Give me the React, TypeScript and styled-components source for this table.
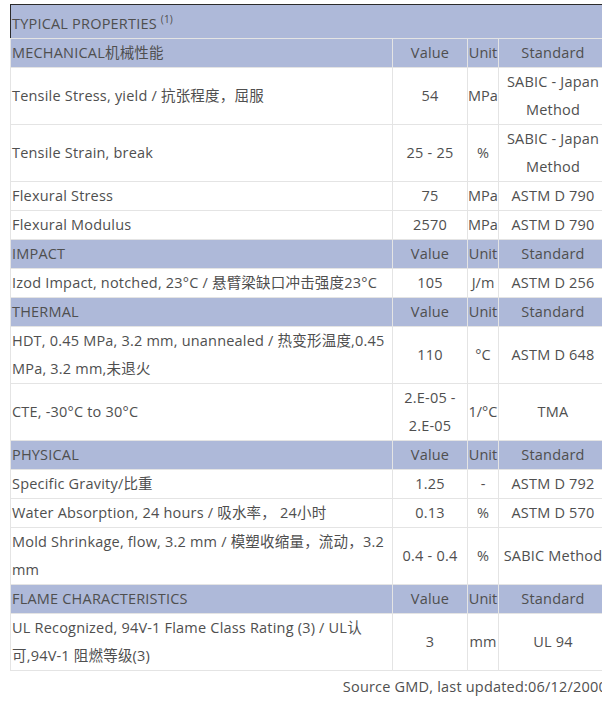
import React from "react";
import styled, { createGlobalStyle } from "styled-components";

const Global = createGlobalStyle`
  html, body { margin: 0; padding: 0; background: #ffffff; }
  body {
    font-family: "Open Sans", "Noto Sans CJK SC", sans-serif;
    color: #4f4f4f;
  }
`;

const Page = styled.div`
  width: 598px;
  padding: 4px 0 0 10px;
`;

const Table = styled.table`
  width: 597px;
  border-collapse: collapse;
  border-top: 1px solid #2b2b2b;
  border-left: 1px solid #2b2b2b;
  border-bottom: 1px solid #2b2b2b;
  font-size: 14.5px;
  letter-spacing: 0.2px;
  line-height: 28px;
  table-layout: fixed;
`;

const Row = styled.tr<{ $head?: boolean }>`
  background: ${(p) => (p.$head ? "#aeb9d9" : "#ffffff")};
`;

const Cell = styled.td<{ $align?: "left" | "center"; $tight?: boolean }>`
  border: 1px solid #e4e4e4;
  padding: ${(p) => (p.$tight ? "0" : "0 1px")};
  text-align: ${(p) => p.$align ?? "center"};
  vertical-align: middle;
  white-space: ${(p) => (p.$tight ? "nowrap" : "normal")};
  letter-spacing: ${(p) => (p.$tight ? "0" : "0.2px")};
  overflow: visible;
`;

const TitleCell = styled.td`
  border-bottom: 1px solid #e4e4e4;
  padding: 5px 1px 0;
  text-align: left;
`;

const Sup = styled.sup`
  font-size: 10px;
  line-height: 0;
  vertical-align: 6px;
`;

const Footer = styled.div`
  width: 597px;
  text-align: right;
  font-size: 14.5px;
  letter-spacing: 0.2px;
  line-height: 20px;
  padding-top: 6px;
  white-space: nowrap;
`;

type Data = [string, string, string, string];
type Section = { title: string; rows: Data[] };

const sections: Section[] = [
  {
    title: "MECHANICAL机械性能",
    rows: [
      ["Tensile Stress, yield / 抗张程度，屈服", "54", "MPa", "SABIC - Japan Method"],
      ["Tensile Strain, break", "25 - 25", "%", "SABIC - Japan Method"],
      ["Flexural Stress", "75", "MPa", "ASTM D 790"],
      ["Flexural Modulus", "2570", "MPa", "ASTM D 790"],
    ],
  },
  {
    title: "IMPACT",
    rows: [["Izod Impact, notched, 23°C / 悬臂梁缺口冲击强度23°C", "105", "J/m", "ASTM D 256"]],
  },
  {
    title: "THERMAL",
    rows: [
      ["HDT, 0.45 MPa, 3.2 mm, unannealed / 热变形温度,0.45 MPa, 3.2 mm,未退火", "110", "°C", "ASTM D 648"],
      ["CTE, -30°C to 30°C", "2.E-05 - 2.E-05", "1/°C", "TMA"],
    ],
  },
  {
    title: "PHYSICAL",
    rows: [
      ["Specific Gravity/比重", "1.25", "-", "ASTM D 792"],
      ["Water Absorption, 24 hours / 吸水率， 24小时", "0.13", "%", "ASTM D 570"],
      ["Mold Shrinkage, flow, 3.2 mm / 模塑收缩量，流动，3.2 mm", "0.4 - 0.4", "%", "SABIC Method"],
    ],
  },
  {
    title: "FLAME CHARACTERISTICS",
    rows: [["UL Recognized, 94V-1 Flame Class Rating (3) / UL认可,94V-1 阻燃等级(3)", "3", "mm", "UL 94"]],
  },
];

export default function App() {
  return (
    <>
      <Global />
      <Page>
        <Table>
          <colgroup>
            <col style={{ width: 382 }} />
            <col style={{ width: 75 }} />
            <col style={{ width: 31 }} />
            <col style={{ width: 109 }} />
          </colgroup>
          <tbody>
            <Row $head>
              <TitleCell colSpan={4}>
                TYPICAL PROPERTIES <Sup>(1)</Sup>
              </TitleCell>
            </Row>
            {sections.map((s) => (
              <React.Fragment key={s.title}>
                <Row $head>
                  <Cell $align="left">{s.title}</Cell>
                  <Cell>Value</Cell>
                  <Cell $tight>Unit</Cell>
                  <Cell>Standard</Cell>
                </Row>
                {s.rows.map((r) => (
                  <Row key={r[0]}>
                    <Cell $align="left">{r[0]}</Cell>
                    <Cell>{r[1]}</Cell>
                    <Cell $tight>{r[2]}</Cell>
                    <Cell>{r[3]}</Cell>
                  </Row>
                ))}
              </React.Fragment>
            ))}
          </tbody>
        </Table>
        <Footer>Source GMD, last updated:06/12/2000</Footer>
      </Page>
    </>
  );
}
